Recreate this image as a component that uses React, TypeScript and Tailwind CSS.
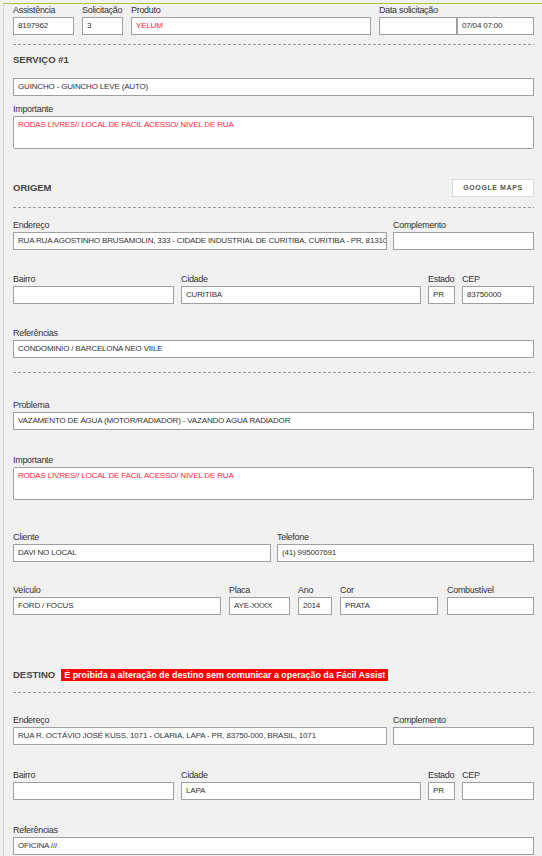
import React from "react";

const Label = ({ text, cls = "h-[14px] leading-[14px]" }: { text: string; cls?: string }) => (
  <div className={`${cls} text-[9px] tracking-[-0.3px] text-[#333] whitespace-nowrap`}>{text}</div>
);

const Box = ({ value = "", red = false, cls = "" }: { value?: string; red?: boolean; cls?: string }) => (
  <div
    className={`h-[18px] border border-[#a0a0a0] bg-white pl-[4px] text-[8px] tracking-[-0.17px] leading-[16px] whitespace-nowrap overflow-hidden ${
      red ? "text-[#ff1f45]" : "text-[#333]"
    } ${cls}`}
  >
    {value}
  </div>
);

const Field = ({
  label,
  value,
  w,
  red,
  lcls,
}: {
  label: string;
  value?: string;
  w: string;
  red?: boolean;
  lcls?: string;
}) => (
  <div className={`flex flex-col ${w}`}>
    <Label text={label} cls={lcls} />
    <Box value={value} red={red} />
  </div>
);

const Area = ({ value }: { value: string }) => (
  <div className="h-[33px] border border-[#a0a0a0] rounded-[2px] bg-white pl-[4px] pt-[1px] text-[8px] tracking-[-0.17px] leading-[14px] text-[#ff1f45] whitespace-nowrap overflow-hidden">
    {value}
  </div>
);

const Dash = ({ cls }: { cls: string }) => (
  <div className={`h-px w-full bg-[repeating-linear-gradient(to_right,#9a9a9a_0_3px,transparent_3px_5px)] ${cls}`} />
);

const Heading = ({ text }: { text: string }) => (
  <div className="text-[9.5px] font-bold text-[#444] leading-[14px] whitespace-nowrap">{text}</div>
);

export default function App() {
  return (
    <div className="min-h-screen bg-[#f1f1f1] pt-[3px] pl-[3px] font-['Liberation_Sans',Arial,sans-serif]">
      <div className="border-t border-l border-t-[#a6c53c] border-l-[#d2d2d2] pl-[9px] pr-[8px] pb-[20px]">
        {/* Row 1 */}
        <div className="flex">
          <Field label="Assistência" value="8197962" w="w-[61px]" lcls="h-[13px] leading-[13px]" />
          <div className="ml-[8px]">
            <Field label="Solicitação" value="3" w="w-[41px]" lcls="h-[13px] leading-[13px]" />
          </div>
          <div className="ml-[8px]">
            <Field label="Produto" value="YELUM" red w="w-[240px]" lcls="h-[13px] leading-[13px]" />
          </div>
          <div className="ml-[8px] flex flex-col">
            <Label text="Data solicitação" cls="h-[13px] leading-[13px]" />
            <div className="flex">
              <Box cls="w-[78px]" />
              <Box cls="w-[77px]" value="07/04 07:00" />
            </div>
          </div>
        </div>

        <Dash cls="mt-[9px]" />

        <div className="mt-[8px]">
          <Heading text="SERVIÇO #1" />
        </div>
        <Box cls="mt-[11px]" value="GUINCHO - GUINCHO LEVE (AUTO)" />
        <div className="mt-[6px]">
          <Label text="Importante" />
          <Area value="RODAS LIVRES// LOCAL DE FACIL ACESSO/ NIVEL DE RUA" />
        </div>

        {/* ORIGEM */}
        <div className="mt-[30px] flex items-center justify-between h-[18px]">
          <Heading text="ORIGEM" />
          <div className="w-[82px] h-[18px] bg-white border border-[#dcdcdc] flex items-center justify-center text-[7px] font-bold tracking-[0.6px] text-[#555]">
            GOOGLE MAPS
          </div>
        </div>
        <Dash cls="mt-[10px]" />

        <div className="mt-[10px] flex gap-[6px]">
          <Field
            label="Endereço"
            value="RUA RUA AGOSTINHO BRUSAMOLIN, 333 - CIDADE INDUSTRIAL DE CURITIBA, CURITIBA - PR, 81310-000, BRASIL"
            w="w-[374px]"
          />
          <Field label="Complemento" w="w-[141px]" />
        </div>

        <div className="mt-[22px] flex gap-[7px]">
          <Field label="Bairro" w="w-[161px]" />
          <Field label="Cidade" value="CURITIBA" w="w-[240px]" />
          <Field label="Estado" value="PR" w="w-[27px]" />
          <Field label="CEP" value="83750000" w="w-[72px]" />
        </div>

        <div className="mt-[22px]">
          <Label text="Referências" />
          <Box value="CONDOMINIO / BARCELONA NEO VIILE" />
        </div>

        <Dash cls="mt-[14px]" />

        <div className="mt-[25px]">
          <Label text="Problema" />
          <Box value="VAZAMENTO DE ÁGUA (MOTOR/RADIADOR) - VAZANDO AGUA RADIADOR" />
        </div>

        <div className="mt-[23px]">
          <Label text="Importante" />
          <Area value="RODAS LIVRES// LOCAL DE FACIL ACESSO/ NIVEL DE RUA" />
        </div>

        <div className="mt-[30px] flex gap-[6px]">
          <Field label="Cliente" value="DAVI NO LOCAL" w="w-[258px]" />
          <Field label="Telefone" value="(41) 995007691" w="w-[257px]" />
        </div>

        <div className="mt-[21px] flex">
          <Field label="Veículo" value="FORD / FOCUS" w="w-[208px]" />
          <div className="ml-[8px]">
            <Field label="Placa" value="AYE-XXXX" w="w-[61px]" />
          </div>
          <div className="ml-[8px]">
            <Field label="Ano" value="2014" w="w-[34px]" />
          </div>
          <div className="ml-[8px]">
            <Field label="Cor" value="PRATA" w="w-[98px]" />
          </div>
          <div className="ml-[9px]">
            <Field label="Combustível" w="w-[87px]" />
          </div>
        </div>

        {/* DESTINO */}
        <div className="mt-[53px] flex items-center h-[14px] gap-[6px]">
          <Heading text="DESTINO" />
          <div className="h-[12px] bg-[#ff0000] px-[3px] text-white text-[9px] font-bold tracking-[-0.05px] leading-[12px] whitespace-nowrap">
            É proibida a alteração de destino sem comunicar a operação da Fácil Assist
          </div>
        </div>
        <Dash cls="mt-[10px]" />

        <div className="mt-[20px] flex gap-[6px]">
          <Field
            label="Endereço"
            value="RUA R. OCTÁVIO JOSÉ KUSS, 1071 - OLARIA, LAPA - PR, 83750-000, BRASIL, 1071"
            w="w-[374px]"
          />
          <Field label="Complemento" w="w-[141px]" />
        </div>

        <div className="mt-[23px] flex gap-[7px]">
          <Field label="Bairro" w="w-[161px]" />
          <Field label="Cidade" value="LAPA" w="w-[240px]" />
          <Field label="Estado" value="PR" w="w-[27px]" />
          <Field label="CEP" w="w-[72px]" />
        </div>

        <div className="mt-[23px]">
          <Label text="Referências" />
          <Box value="OFICINA ///" />
        </div>
      </div>
    </div>
  );
}
